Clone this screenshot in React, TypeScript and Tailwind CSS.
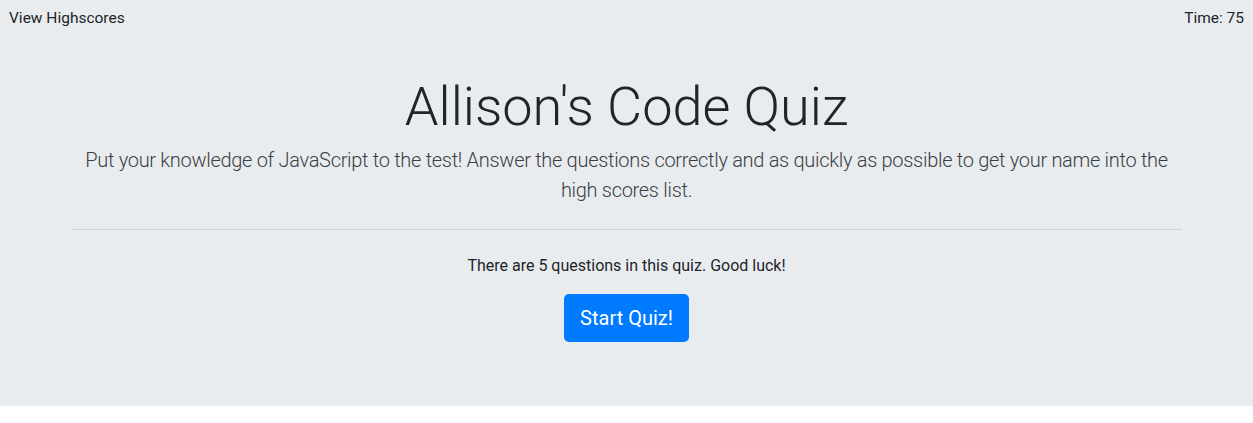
export default function App() {
  return (
    <div className="min-h-[423px] bg-white font-['Roboto',sans-serif] text-[#212529]">
      <div className="bg-[#e9ecef] pb-16">
        <header className="flex justify-between px-[9px] pt-[6px] text-[15.5px] leading-6">
          <a href="#" className="text-[#212529]">View Highscores</a>
          <span>Time: 75</span>
        </header>
        <div className="mx-auto w-[1110px] pt-[43px] text-center">
          <h1 className="mb-[5px] text-[54px] font-light leading-[67px]">Allison's Code Quiz</h1>
          <p className="text-[20px] font-light leading-[30px] tracking-[-0.3px] text-[#3a3f44]">
            Put your knowledge of JavaScript to the test! Answer the questions correctly and as quickly as possible to get your name into the high scores list.
          </p>
          <hr className="my-6 border-t border-black/10" />
          <p className="mb-4 text-[16px] leading-6">There are 5 questions in this quiz. Good luck!</p>
          <button className="rounded-[5px] bg-[#007bff] px-4 py-[9px] text-[20px] leading-[30px] text-white">
            Start Quiz!
          </button>
        </div>
      </div>
    </div>
  );
}
